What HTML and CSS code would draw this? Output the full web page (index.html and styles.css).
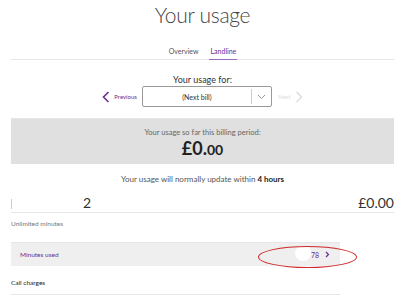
FILE: index.html
```html
<!DOCTYPE html>
<html lang="en">
<head>
    <meta charset="UTF-8">
    <meta name="viewport" content="width=device-width, initial-scale=1.0">
    <title>Your usage</title>
    <link rel="stylesheet" href="styles.css">
</head>
<body>
    <h1>Your usage</h1>

    <nav class="tabs">
        <a href="#" class="tab">Overview</a>
        <a href="#" class="tab active">Landline</a>
    </nav>

    <section class="period">
        <p class="period-label">Your usage for:</p>
        <div class="period-row">
            <a href="#" class="step prev">
                <svg width="8" height="12" viewBox="0 0 8 12"><path d="M6.5 1 1.5 6l5 5" fill="none" stroke="#6b2c91" stroke-width="1.6"/></svg>
                Previous
            </a>
            <div class="select">
                <span class="select-value">(Next bill)</span>
                <span class="select-arrow">
                    <svg width="9" height="6" viewBox="0 0 9 6"><path d="M1 1l3.5 3.5L8 1" fill="none" stroke="#999" stroke-width="1"/></svg>
                </span>
            </div>
            <a href="#" class="step next">
                Next
                <svg width="8" height="12" viewBox="0 0 8 12"><path d="M1.5 1l5 5-5 5" fill="none" stroke="#ddd" stroke-width="1.4"/></svg>
            </a>
        </div>
    </section>

    <div class="summary">
        <p>Your usage so far this billing period:</p>
        <p class="total">£0.<small>00</small></p>
    </div>

    <p class="note">Your usage will normally update within <b>4 hours</b></p>

    <div class="line-item">
        <span class="line-name"><span class="mask"></span>2</span>
        <span class="line-cost">£0.00</span>
    </div>
    <p class="plan">Unlimited minutes</p>

    <div class="details">
        <a href="#" class="detail shaded">
            <span>Minutes used</span>
            <span class="detail-value"><span class="blot"></span>78
                <svg width="5" height="7" viewBox="0 0 5 7"><path d="M1 1l2.5 2.5L1 6" fill="none" stroke="#6b2c91" stroke-width="1.2"/></svg>
            </span>
            <span class="circle"></span>
        </a>
        <div class="detail">
            <span class="dark">Call charges</span>
        </div>
    </div>
</body>
</html>
```

FILE: styles.css
```css
body {
    font-family: Lato, Arial, sans-serif;
    margin: 0;
    padding: 0 5px 0 11px;
    background: white;
    color: #555;
    font-size: 9px;
}
h1 {
    margin: 0;
    padding-top: 2px;
    text-align: center;
    font-size: 21px;
    font-weight: 300;
    letter-spacing: -0.3px;
    line-height: 25px;
    color: #444;
}
.tabs {
    display: flex;
    justify-content: center;
    gap: 10px;
    margin-top: 20px;
    border-bottom: 1px solid #e6e6e6;
}
.tab {
    color: #555;
    text-decoration: none;
    font-size: 7px;
    padding: 0 1px 4px;
    border-bottom: 1px solid transparent;
    margin-bottom: -1px;
}
.tab.active {
    color: #6b2c91;
    border-bottom-color: #9b6bb8;
}
.period {
    border-bottom: 1px solid #e6e6e6;
    padding: 14px 0 11px;
}
.period-label {
    margin: 0;
    text-align: center;
    font-size: 9px;
    color: #333;
}
.period-row {
    display: flex;
    justify-content: center;
    align-items: center;
    gap: 5px;
    margin-top: 1px;
}
.step {
    display: flex;
    align-items: center;
    gap: 4px;
    font-size: 6px;
    text-decoration: none;
    color: #6b2c91;
}
.step.next {
    color: #ddd;
    margin-left: 1px;
}
.select {
    display: flex;
    width: 128px;
    height: 19px;
    border: 1px solid #999;
    border-radius: 2px;
}
.select-value {
    flex: 1;
    display: flex;
    align-items: center;
    justify-content: center;
    font-size: 7px;
    color: #333;
}
.select-arrow {
    width: 19px;
    display: flex;
    align-items: center;
    justify-content: center;
    border-left: 1px solid #ccc;
    margin: 2px 0;
}
.summary {
    background: #e0e0e0;
    text-align: center;
    padding: 9px 0 3px;
}
.summary p {
    margin: 0;
    font-size: 7.5px;
    color: #666;
}
.summary .total {
    font-size: 18px;
    font-weight: 700;
    color: #222;
    line-height: 22px;
}
.total small {
    font-size: 14px;
}
.note {
    margin: 10px 0 0;
    text-align: center;
    font-size: 8px;
    color: #555;
}
.note b {
    color: #222;
    font-weight: 700;
}
.line-item {
    display: flex;
    justify-content: space-between;
    align-items: baseline;
    margin-top: 10px;
    padding-bottom: 1px;
    border-bottom: 1px solid #e6e6e6;
    font-size: 14px;
    color: #333;
}
.mask {
    display: inline-block;
    width: 71px;
    height: 10px;
    vertical-align: middle;
    border-left: 1px solid #ccc;
}
.plan {
    margin: 7px 0 0;
    font-size: 6.5px;
    color: #777;
}
.details {
    width: 329px;
    margin-top: 15px;
    border-top: 1px solid #e6e6e6;
}
.detail {
    display: flex;
    justify-content: space-between;
    align-items: center;
    height: 23px;
    padding: 0 10px 0 9px;
    font-size: 6.5px;
    text-decoration: none;
    border-bottom: 1px solid #e6e6e6;
}
.detail.shaded {
    position: relative;
    background: #efefef;
    color: #6b2c91;
    border-bottom: none;
    margin-bottom: 5px;
}
.detail-value {
    position: relative;
    display: flex;
    align-items: center;
    gap: 6px;
    font-size: 7px;
    color: #6b2c91;
}
.blot {
    position: absolute;
    right: 19px;
    top: -5px;
    width: 16px;
    height: 15px;
    background: white;
    border-radius: 50% 40% 50% 50%;
}
.circle {
    position: absolute;
    left: 247px;
    top: 3px;
    width: 97px;
    height: 20px;
    border: 1.5px solid #d02a2a;
    border-radius: 50%;
}
.dark {
    color: #222;
    margin-left: -9px;
}
```
